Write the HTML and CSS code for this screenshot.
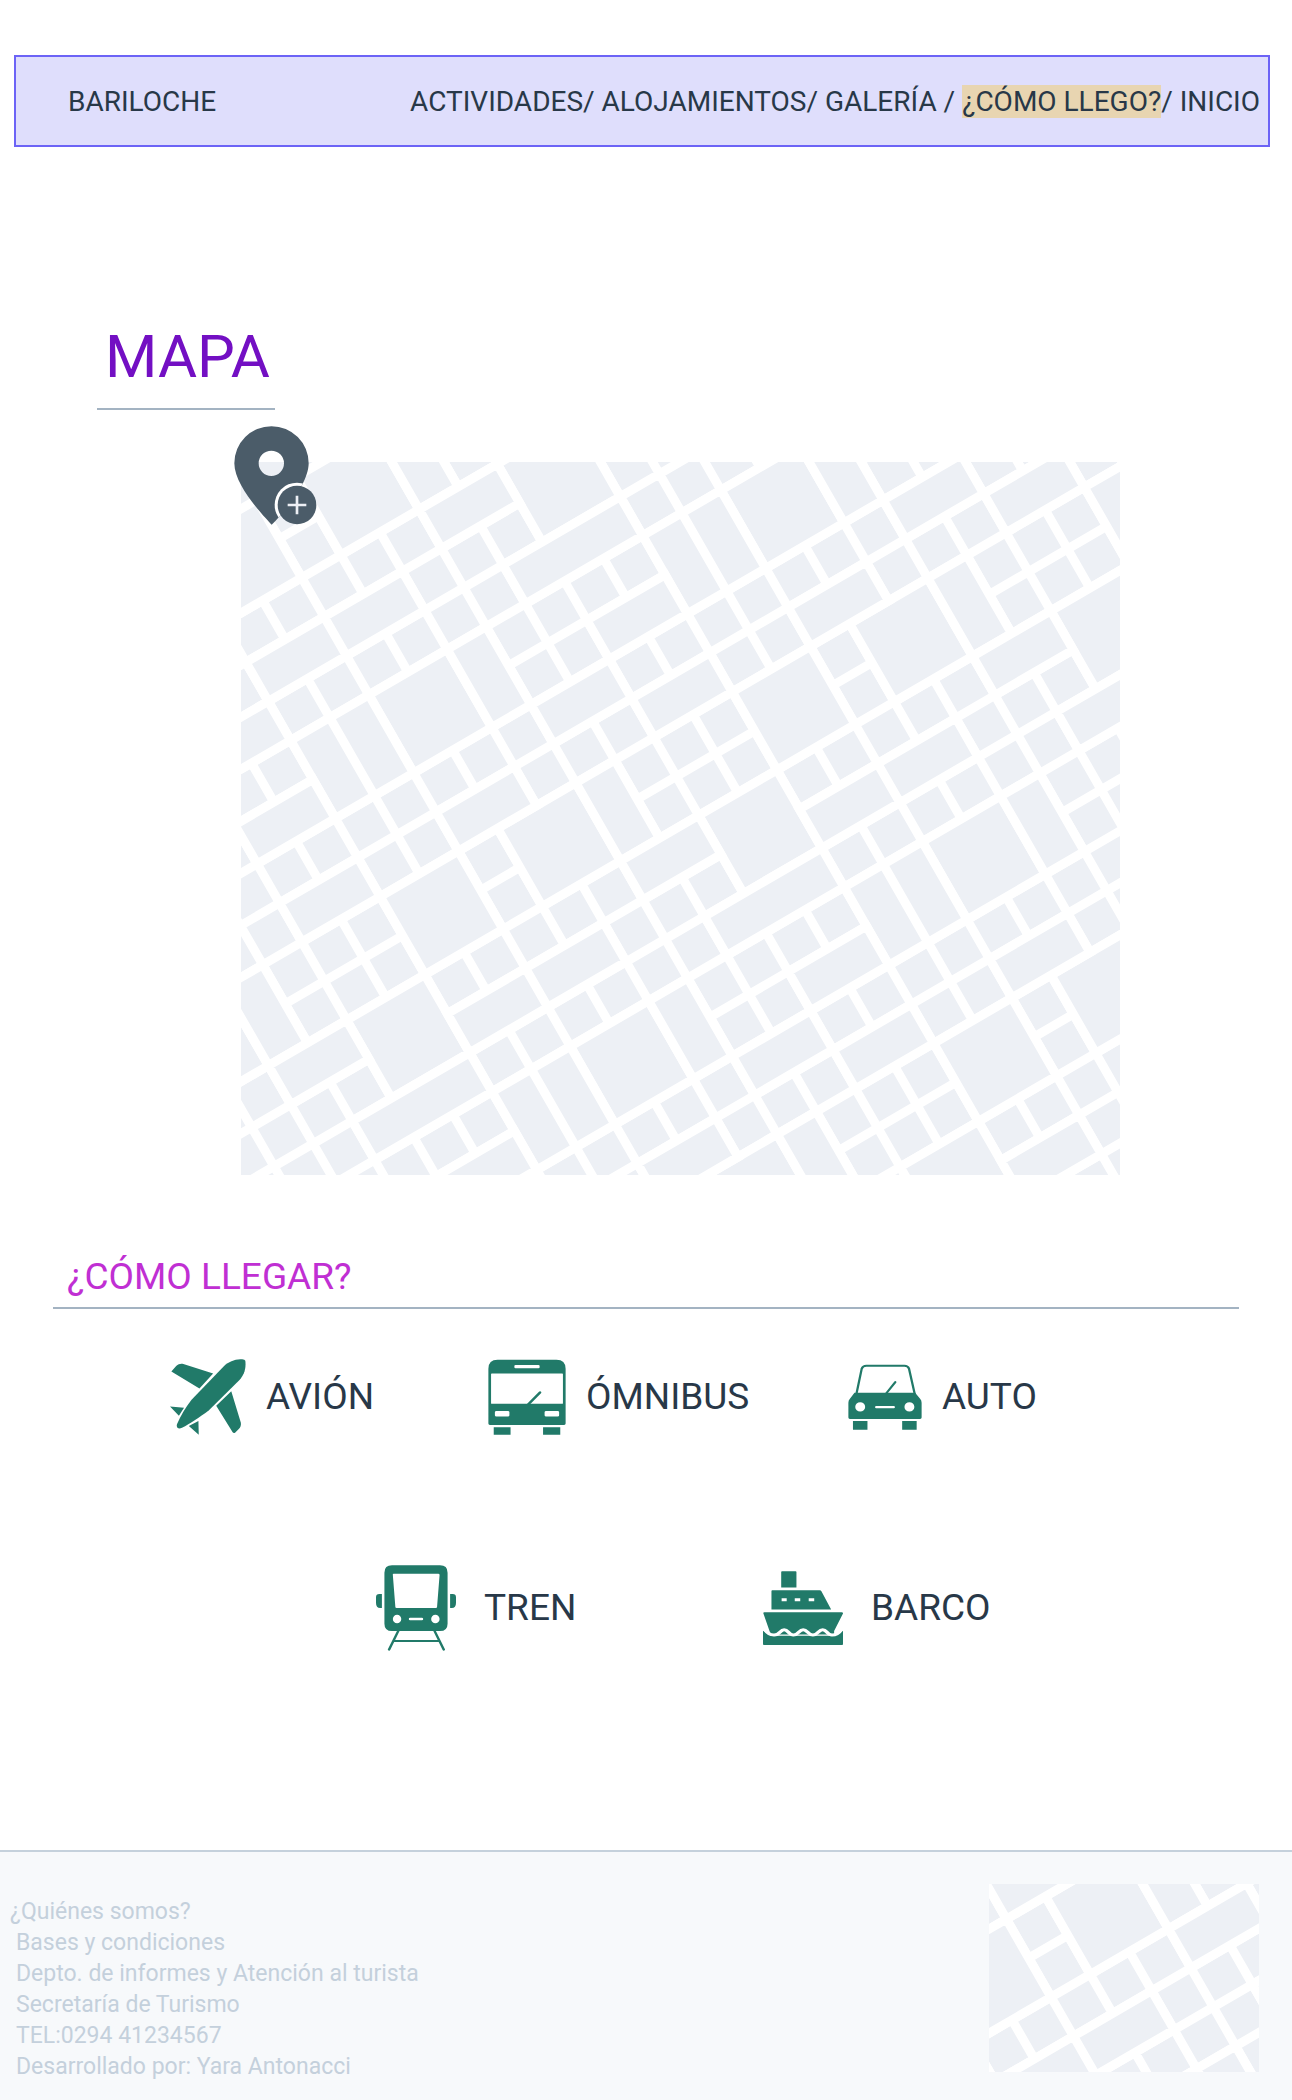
FILE: index.html
```html
<!DOCTYPE html>
<html lang="es">
<head>
<meta charset="utf-8">
<meta name="viewport" content="width=device-width, initial-scale=1">
<title>Bariloche - ¿Cómo llego?</title>
<link rel="stylesheet" href="styles.css">
</head>
<body>
<header class="topbar">
  <a class="brand" href="#">BARILOCHE</a>
  <nav class="menu"><a href="#">ACTIVIDADES</a>/ <a href="#">ALOJAMIENTOS</a>/ <a href="#">GALERÍA</a> / <a class="current" href="#" aria-current="page">¿CÓMO LLEGO?</a>/ <a href="#">INICIO</a></nav>
</header>

<main>
  <h1 class="title">MAPA</h1>
  <div class="map">
    <svg class="map-streets" viewBox="0 0 879 713" role="img" aria-label="Mapa de la ciudad">
      <defs>
        <!-- One unit is one city block; the matrix turns the grid about 30 degrees -->
        <g id="streets">
          <rect width="879" height="713" fill="#edf0f5"/>
          <g transform="matrix(39.12 -22.74 22.38 39.05 60.7 115.7)" stroke="#fff" stroke-width=".2">
            <path d="M-9-5v27M-8-5v27M-7-5v27M-6-5v27M-5-5v27M-4-5v27M-3-5v27M-2-5v27M-1-5v27M0-5v27M1-5v27M2-5v27M3-5v27M4-5v27M5-5v27M6-5v27M7-5v27M8-5v27M9-5v27M10-5v27M11-5v27M12-5v27M13-5v27M14-5v27M15-5v27M16-5v27M17-5v27M18-5v27M-9-5h27M-9-4h27M-9-3h27M-9-2h27M-9-1h27M-9 0h27M-9 1h27M-9 2h27M-9 3h27M-9 4h27M-9 5h27M-9 6h27M-9 7h27M-9 8h27M-9 9h27M-9 10h27M-9 11h27M-9 12h27M-9 13h27M-9 14h27M-9 15h27M-9 16h27M-9 17h27M-9 18h27M-9 19h27M-9 20h27M-9 21h27"/>
            <!-- blocks of 2 x 2 -->
            <path fill="#edf0f5" d="M-1-4h3v2h-3zM-2-2h2v2h-2zM1-2h2v2h-2zM5 0h2v2h-2zM0 3h2v2h-2zM9 3h2v2h-2zM-8 7h2v2h-2zM-2 7h2v2h-2zM1 7h2v2h-2zM7 7h2v2h-2zM10 7h2v2h-2zM16 7h2v2h-2zM-4 9h2v2h-2zM5 9h2v2h-2zM14 9h2v2h-2zM0 12h2v2h-2zM9 12h2v2h-2zM1 16h2v2h-2zM7 16h2v2h-2zM10 16h2v2h-2zM5 18h2v2h-2z"/>
            <!-- blocks of 1 x 2 -->
            <path fill="#edf0f5" d="M3-2h1v2h-1zM-2 3h1v2h-1zM-1 3h1v2h-1zM2 3h1v2h-1zM7 3h1v2h-1zM8 3h1v2h-1zM11 3h1v2h-1zM-6 7h1v2h-1zM3 7h1v2h-1zM12 7h1v2h-1zM-2 12h1v2h-1zM-1 12h1v2h-1zM2 12h1v2h-1zM7 12h1v2h-1zM8 12h1v2h-1zM11 12h1v2h-1zM3 16h1v2h-1z"/>
            <!-- blocks of 2 x 1 and 3 x 1 -->
            <path fill="#edf0f5" d="M3 0h2v1h-2zM-2 1h2v1h-2zM0 1h2v1h-2zM-4 2h2v1h-2zM4 2h3v1h-3zM-4 4h2v1h-2zM5 4h2v1h-2zM3 5h2v1h-2zM12 5h2v1h-2zM-4 6h2v1h-2zM0 6h2v1h-2zM5 6h2v1h-2zM9 6h2v1h-2zM14 6h2v1h-2zM-6 9h2v1h-2zM3 9h2v1h-2zM12 9h2v1h-2zM-2 10h2v1h-2zM0 10h2v1h-2zM7 10h2v1h-2zM9 10h2v1h-2zM-5 11h3v1h-3zM4 11h3v1h-3zM13 11h2v1h-2zM-4 13h2v1h-2zM5 13h2v1h-2zM3 14h2v1h-2zM0 15h2v1h-2zM5 15h2v1h-2zM9 15h2v1h-2zM7 19h2v1h-2z"/>
          </g>
        </g>
      </defs>
      <use href="#streets"/>
    </svg>
    <svg class="pin" viewBox="462 378 249 298" aria-hidden="true">
      <defs>
        <clipPath id="pin-shape"><path d="M575 674C545 642 463 555 463 490A111 111 0 0 1 686 490C686 545 625 625 575 674Z"/></clipPath>
      </defs>
      <path fill="#4b5c69" fill-rule="evenodd" d="M575 674C545 642 463 555 463 490A111 111 0 0 1 686 490C686 545 625 625 575 674ZM536 490a38 38 0 1 0 76 0a38 38 0 1 0-76 0Z"/>
      <circle cx="651" cy="615" r="67" fill="#fff" clip-path="url(#pin-shape)"/>
      <circle cx="651" cy="615" r="58" fill="#4b5c69"/>
      <path d="M623 615h56M651 587v56" stroke="#edf0f5" stroke-width="8"/>
    </svg>
  </div>

  <h2 class="subtitle">¿CÓMO LLEGAR?</h2>
  <ul class="ways ways-first">
    <li class="way">
      <svg class="icon" width="76" height="76" viewBox="377 393 222 229" preserveAspectRatio="none" aria-hidden="true">
        <path d="M597 398C600 425 592 443 580 456L490 548C465 567 435 588 412 600C400 606 394 598 398 588C408 565 422 540 440 516L535 414C550 400 572 390 594 395Z"/>
        <path d="M381 431L395 414C402 408 408 406 416 408L503 437L463 482ZM556 490L584 585C585 592 583 600 578 604L567 615Q563 618 560 614L512 534ZM377 536L418 540L403 564ZM460 580L461 621L432 595Z"/>
      </svg>
      <span>AVIÓN</span>
    </li>
    <li class="way">
      <svg class="icon" width="78" height="76" viewBox="47 51 204 227" preserveAspectRatio="none" aria-hidden="true">
        <path fill-rule="evenodd" d="M48 80Q48 53 72 53H226Q250 53 250 80V244q0 4-4 4H52q-4 0-4-4ZM57 94q-2 0-2 2v87q0 2 2 2H241q2 0 2-2V96q0-2-2-2ZM119 69q-3 0-3 3v4q0 3 3 3h60q3 0 3-3v-4q0-3-3-3ZM69 206q-4 0-4 4v9q0 4 4 4h30q4 0 4-4v-9q0-4-4-4ZM199 206q-4 0-4 4v9q0 4 4 4h30q4 0 4-4v-9q0-4-4-4ZM62 255h44v22H62ZM191 255h45v22h-45Z"/>
        <path class="line" d="M152 187L183 151" stroke-width="7"/>
      </svg>
      <span>ÓMNIBUS</span>
    </li>
    <li class="way">
      <svg class="icon" width="74" height="66" viewBox="988 62 194 197" preserveAspectRatio="none" aria-hidden="true">
        <path class="line" d="M1010 152L1024 76Q1027 67 1036 67H1136Q1145 67 1148 76L1163 152" stroke-width="6"/>
        <path fill-rule="evenodd" d="M1005 148H1164L1177 166Q1181 171 1181 178V222q0 4-4 4H993q-4 0-4-4V178Q989 171 993 166ZM1007 190a13 14 0 1 0 26 0a13 14 0 1 0-26 0ZM1136 190a13 14 0 1 0 26 0a13 14 0 1 0-26 0ZM1062 187q-3 0-3 3v1q0 3 3 3h46q3 0 3-3v-1q0-3-3-3ZM1001 232h38v26h-38ZM1130 232h38v26h-38Z"/>
        <path class="line" d="M1088 150L1112 116" stroke-width="6"/>
      </svg>
      <span>AUTO</span>
    </li>
  </ul>
  <ul class="ways ways-second">
    <li class="way">
      <svg class="icon" width="80" height="86" viewBox="38 45 190 258" preserveAspectRatio="none" aria-hidden="true">
        <path fill-rule="evenodd" d="M76 46H190Q208 46 208 68V221Q208 243 190 243H76Q58 243 58 221V68Q58 46 76 46ZM80 71q-3 0-2 4L84 171q0 3 3 3H180q3 0 3-3L189 75q0-4-3-4ZM78 207a10 13 0 1 0 20 0a10 13 0 1 0-20 0ZM169 207a10 13 0 1 0 20 0a10 13 0 1 0-20 0ZM119 203q-3 0-3 3v2q0 3 3 3h28q3 0 3-3v-2q0-3-3-3ZM52 132H46Q38 132 38 142V158Q38 174 48 174H52ZM214 132H220Q228 132 228 142V158Q228 174 218 174H214Z"/>
        <path class="line" d="M92 240L69 299M176 240L199 299M82 273H187" stroke-width="6"/>
      </svg>
      <span>TREN</span>
    </li>
    <li class="way">
      <svg class="icon" width="80" height="74" viewBox="958 63 189 223" preserveAspectRatio="none" aria-hidden="true">
        <path fill-rule="evenodd" d="M1003 64h32q2 0 2 2v47h-36v-47q0-2 2-2ZM980 121H1092q3 0 4 3L1119 179H978V123q0-2 2-2ZM1002 145v9h12v-9ZM1033 145v9h13v-9ZM1066 145v9h13v-9ZM961 187H1144q4 0 3 4L1126 244V258H974V246L959 191q-1-4 2-4ZM958 243V283q0 3 2 3H1145q2 0 2-3V243L1128 254H974Z"/>
        <path d="M960 236C967 250 974 256 984 256C998 256 998 240 1008 240S1018 256 1030 256S1043 240 1053 240S1064 256 1076 256S1089 240 1099 240S1109 256 1121 256C1132 256 1139 250 1145 236" fill="none" stroke="#fff" stroke-width="9"/>
      </svg>
      <span>BARCO</span>
    </li>
  </ul>
</main>

<footer class="footer">
  <ul class="info">
    <li class="info-first"><a href="#">¿Quiénes somos?</a></li>
    <li><a href="#">Bases y condiciones</a></li>
    <li>Depto. de informes y Atención al turista</li>
    <li>Secretaría de Turismo</li>
    <li>TEL:0294 41234567</li>
    <li>Desarrollado por: Yara Antonacci</li>
  </ul>
  <svg class="footer-map" viewBox="200 354 270 188" role="img" aria-label="Mapa de ubicación"><use href="#streets"/></svg>
</footer>
</body>
</html>
```
FILE: styles.css
```css
* {
  box-sizing: border-box;
}

body {
  margin: 0;
  min-height: 100vh;
  display: flex;
  flex-direction: column;
  background: #fff;
  color: #283848;
  font-family: Roboto, "Liberation Sans", sans-serif;
}

a {
  color: inherit;
  text-decoration: none;
}

ul {
  margin: 0;
  padding: 0;
  list-style: none;
}

.topbar {
  display: flex;
  flex-wrap: wrap;
  align-items: center;
  justify-content: space-between;
  min-height: 92px;
  margin: 55px 22px 0 14px;
  padding: 0 8px 0 52px;
  border: 2px solid #6c63f6;
  background: #dfdefc;
  font-size: 28px;
  line-height: 33px;
}

.current {
  background: #e8d5b1;
}

.title {
  width: 178px;
  margin: 174px 0 52px 97px;
  padding: 0 0 15px 8px;
  border-bottom: 2px solid #a3b3c2;
  color: #730fc3;
  font-size: 60px;
  line-height: 72px;
  font-weight: 400;
}

.map {
  position: relative;
  margin: 0 172px 0 241px;
}

.map-streets {
  display: block;
  width: 100%;
}

.pin {
  position: absolute;
  top: -36px;
  left: -7px;
  width: 83px;
}

.subtitle {
  margin: 80px 53px 0;
  padding: 0 14px 8px;
  border-bottom: 2px solid #a3b3c2;
  color: #c02fd3;
  font-size: 37px;
  line-height: 44px;
  font-weight: 400;
}

.ways {
  display: grid;
  align-items: center;
  font-size: 37px;
  line-height: 44px;
}

.ways-first {
  grid-template-columns: 318fr 360fr 391fr;
  min-height: 80px;
  margin: 48px 53px 0 170px;
}

.ways-second {
  grid-template-columns: 387fr 476fr;
  min-height: 86px;
  margin: 128px 53px 0 376px;
}

.way {
  display: flex;
  align-items: center;
  gap: 20px;
}

.ways-second .way {
  gap: 28px;
}

.icon {
  flex: none;
  fill: #217a69;
}

.icon .line {
  fill: none;
  stroke: #217a69;
  stroke-linecap: round;
}

.footer {
  flex: 1;
  display: flex;
  align-items: flex-start;
  justify-content: space-between;
  margin-top: 199px;
  padding: 32px 33px 18px 8px;
  border-top: 2px solid #c5d1dc;
  background: #f7f9fb;
  color: #c4d0dc;
  font-size: 23px;
  line-height: 31px;
}

.info {
  padding: 12px 0 0 8px;
}

.info-first {
  margin-left: -6px;
}

.footer-map {
  flex: none;
  width: 270px;
}
```
